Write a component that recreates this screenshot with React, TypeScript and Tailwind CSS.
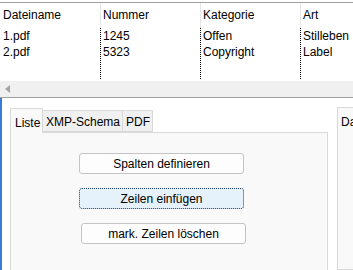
const COLUMNS = [
  { title: 'Dateiname', width: 'w-[100px]', values: ['1.pdf', '2.pdf'] },
  { title: 'Nummer', width: 'w-[100px]', values: ['1245', '5323'] },
  { title: 'Kategorie', width: 'w-[100px]', values: ['Offen', 'Copyright'] },
  { title: 'Art', width: 'w-[100px]', values: ['Stilleben', 'Label'] },
]

function ListView() {
  return (
    <div className="h-[98px] border-b border-[#a0a0a0] flex flex-col">
      <div className="h-[2px]" />
      <div className="border-t border-[#a0a0a0] flex-1 flex flex-col">
        <div className="flex flex-1">
          {COLUMNS.map((col, i) => (
            <div key={col.title} className={`${col.width} shrink-0 flex flex-col`}>
              {/* Header */}
              <div className={`h-[25px] pt-[3px] ${i === 0 ? 'pl-[3px]' : 'pl-[2px] border-l border-[#e5e5e5]'}`}>
                <span className="leading-4">{col.title}</span>
              </div>
              {/* Rows */}
              <div className="flex-1 flex flex-col">
                <div className={`h-[51px] ${i === 0 ? 'pl-[3px]' : 'pl-[2px] border-l border-dotted border-black'}`}>
                  {col.values.map(v => (
                    <div key={v} className="h-[16px] leading-4">{v}</div>
                  ))}
                </div>
              </div>
            </div>
          ))}
        </div>
        {/* Horizontal scrollbar */}
        <div className="h-[16px] bg-[#f0f0f0] flex items-center pl-[5px]">
          <svg width="5" height="8" viewBox="0 0 5 8">
            <path d="M5 0 L0 4 L5 8 Z" fill="#a3a3a3" />
          </svg>
        </div>
      </div>
    </div>
  )
}

function Button({ label, focused, offset }: { label: string; focused?: boolean; offset: string }) {
  return (
    <button
      className={`${offset} w-[165px] h-[21px] rounded-[3px] text-[12px] leading-4 text-black flex items-center justify-center ${
        focused ? 'bg-[#e5f1fb] border border-dotted border-[#1c3c6c]' : 'bg-[#fdfdfd] border border-[#c4c4c4]'
      }`}
    >
      {label}
    </button>
  )
}

export default function App() {
  return (
    <div
      className="w-[353px] h-[270px] overflow-hidden bg-white text-[12px] text-black flex flex-col"
      style={{ fontFamily: '"Liberation Sans", Arial, sans-serif' }}
    >
      <ListView />

      <div className="flex flex-1 min-h-0">
        <div className="w-[2px] bg-[#3a7bd5] shrink-0" />
        <div className="w-[8px] shrink-0" />

        {/* Tab control */}
        <div className="w-[318px] shrink-0 flex flex-col pt-[9px]">
          <div className="flex items-end h-[25px]">
            <div className="w-[33px] h-[25px] bg-[#f9f9f9] border border-b-0 border-[#d9d9d9] pl-[4px] pt-[6px] leading-4 relative z-10 -mb-px">
              Liste
            </div>
            <div className="w-[80px] h-[22px] bg-[#f0f0f0] border border-l-0 border-[#d9d9d9] pl-[3px] pt-[3px] leading-4">
              XMP-Schema
            </div>
            <div className="w-[30px] h-[22px] bg-[#f0f0f0] border border-l-0 border-[#d9d9d9] pl-[3px] pt-[3px] leading-4">
              PDF
            </div>
          </div>
          <div className="flex-1 bg-[#f9f9f9] border border-b-0 border-[#d9d9d9] flex flex-col pt-[20px]">
            <Button label="Spalten definieren" offset="ml-[68px]" />
            <Button label="Zeilen einfügen" focused offset="ml-[68px] mt-[14px]" />
            <Button label="mark. Zeilen löschen" offset="ml-[70px] mt-[14px]" />
          </div>
        </div>

        {/* Right panel */}
        <div className="ml-[9px] mt-[9px] w-[60px] shrink-0 bg-[#f9f9f9] border border-[#d9d9d9] pl-[3px] pt-[6px] leading-4">
          Da
        </div>
      </div>
    </div>
  )
}
